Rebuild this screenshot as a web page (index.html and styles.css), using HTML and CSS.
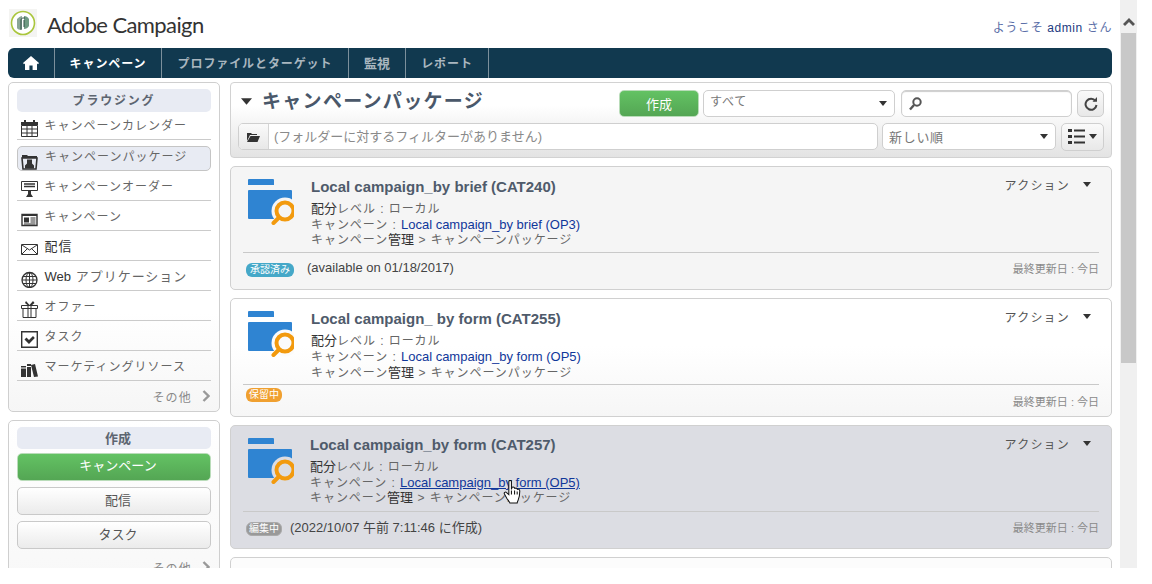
FILE: index.html
```html
<!DOCTYPE html>
<html lang="ja">
<head>
<meta charset="utf-8">
<title>Adobe Campaign</title>
<link rel="stylesheet" href="styles.css">
</head>
<body>
<svg class="defs" width="0" height="0" aria-hidden="true">
  <symbol id="folder-search" viewBox="0 0 46 46">
    <path d="M1 0h24a1 1 0 0 1 1 1v5H0V1a1 1 0 0 1 1-1z" fill="#2f84d2"/>
    <path d="M0 12a1 1 0 0 1 1-1h42a1 1 0 0 1 1 1v27a1 1 0 0 1-1 1H1a1 1 0 0 1-1-1z" fill="#2f84d2"/>
    <circle cx="37" cy="32" r="13.500" fill="currentColor"/>
    <circle cx="37" cy="32" r="8.500" fill="currentColor" stroke="#f29a0e" stroke-width="4"/>
    <path d="M31 38.500l-5.500 5.500" stroke="#f29a0e" stroke-width="4" stroke-linecap="round"/>
  </symbol>
  <symbol id="caret" viewBox="0 0 10 6"><path d="M0 0h10L5 6z"/></symbol>
  <symbol id="chev" viewBox="0 0 8 12"><path d="M1.500 1l5 5-5 5" fill="none" stroke="#999" stroke-width="2.400"/></symbol>
</svg>

<div class="viewport">
  <div class="page">
    <header class="top">
      <div class="brand">
        <span class="logo">
          <svg width="28" height="28" viewBox="0 0 28 28">
            <rect width="28" height="28" fill="#f4f4f2"/>
            <circle cx="14" cy="14" r="11.500" fill="#fff" stroke="#aac63c" stroke-width="1.600"/>
            <path d="M8 10c2-2 4-3 5-3v13c-2 1-4 1-5-1z" fill="#8aa596"/>
            <path d="M15 7c2 0 4 1 5 3v7c-1 2-3 3-5 3z" fill="#6f9a82"/>
            <path d="M12 21V11c0-1 1-2 2-2h2M15 18v-7" fill="none" stroke="#2f4f45" stroke-width="1"/>
          </svg>
        </span>
        <span class="brand-name">Adobe Campaign</span>
      </div>
      <div class="welcome">ようこそ <b>admin</b> さん</div>
    </header>

    <nav class="nav">
      <a class="nav-home" href="#">
        <svg width="16" height="14" viewBox="0 0 16 14"><path d="M8 0l8 7-1 1.200-1-.8V14H9.600V9.400H6.400V14H2V7.400l-1 .8L0 7z" fill="#fff"/></svg>
      </a>
      <a class="nav-item active w-camp" href="#">キャンペーン</a>
      <a class="nav-item w-prof" href="#">プロファイルとターゲット</a>
      <a class="nav-item w-mon" href="#">監視</a>
      <a class="nav-item w-rep" href="#">レポート</a>
    </nav>

    <div class="columns">
      <aside class="side">
        <section class="panel browse">
          <h3 class="panel-head">ブラウジング</h3>
          <ul class="menu">
            <li class="menu-item">
              <svg class="mi" viewBox="0 0 17 17"><path d="M4 0v3M13 0v3" stroke="#333" stroke-width="2"/><path d="M0 2h17v3H0z" fill="#333"/><path d="M.5 5.500h16v11H.5zM.5 9h16M.5 13h16M6 5.500v11M11 5.500v11" fill="none" stroke="#333"/></svg>
              <span>キャンペーンカレンダー</span>
            </li>
            <li class="menu-item selected">
              <svg class="mi" viewBox="0 0 17 17"><path d="M1 2h5l1 1h9v2H1z" fill="#333"/><path d="M1 5h15l-1 11H2z" fill="none" stroke="#333" stroke-width="1.600"/><path d="M6 6.500h5v4l2 2v3H4v-3l2-2z" fill="#333"/></svg>
              <span>キャンペーンパッケージ</span>
            </li>
            <li class="menu-item">
              <svg class="mi" viewBox="0 0 17 17"><path d="M.5.5h16v9H.5z" fill="#fff" stroke="#333"/><path d="M3 3h11M3 5.500h11" stroke="#333" stroke-width="1.400"/><path d="M7 9h3v4l2 3H5l2-3z" fill="#333"/></svg>
              <span>キャンペーンオーダー</span>
            </li>
            <li class="menu-item">
              <svg class="mi" viewBox="0 0 17 17"><path d="M1 3.500h15v11H1z" fill="#fff" stroke="#333" stroke-width="1.400"/><path d="M1 3h15v2H1zM3 6.500h5v5H3z" fill="#333"/><path d="M9.500 7h5M9.500 9h5M9.500 11h5M3 13h11.500" stroke="#333"/></svg>
              <span>キャンペーン</span>
            </li>
            <li class="menu-item">
              <svg class="mi" viewBox="0 0 17 17"><path d="M.5 3.500h16v10H.5z" fill="#fff" stroke="#333"/><path d="M1 4l7.500 5L16 4M1 13l5.500-5.500M16 13l-5.500-5.500" fill="none" stroke="#333"/></svg>
              <span class="dark">配信</span>
            </li>
            <li class="menu-item">
              <svg class="mi" viewBox="0 0 17 17"><circle cx="8.500" cy="9" r="7.500" fill="#fff" stroke="#333" stroke-width="1.300"/><path d="M1 9h15M2 5.500h13M2 12.500h13M8.500 1.500v15" stroke="#333"/><ellipse cx="8.500" cy="9" rx="3.500" ry="7.500" fill="none" stroke="#333"/></svg>
              <span class="dark"><span class="latin">Web</span> <span class="kana">アプリケーション</span></span>
            </li>
            <li class="menu-item">
              <svg class="mi" viewBox="0 0 17 17"><path d="M5 0l3.500 4L12 0l1.500 2-3 2.500H7L4 2z" fill="#333"/><path d="M.5 4.500h16v3H.5zM2 7.500h13v9H2zM7 4.500h3v12H7z" fill="#fff" stroke="#333"/></svg>
              <span>オファー</span>
            </li>
            <li class="menu-item">
              <svg class="mi" viewBox="0 0 17 17"><path d="M.7.7h15.600v15.600H.7z" fill="#fff" stroke="#333" stroke-width="1.400"/><path d="M3.500 8.500l2-2 2.500 2.500 4-4 1.800 2-5.800 6z" fill="#333"/></svg>
              <span>タスク</span>
            </li>
            <li class="menu-item">
              <svg class="mi" viewBox="0 0 17 17"><path d="M0 5h5v11H0zM6 3h4v13H6zM10 4l4-1 3 12.500-4 .500z" fill="#333"/><path d="M0 7h5M6 5.500h4" stroke="#fff"/></svg>
              <span>マーケティングリソース</span>
            </li>
          </ul>
          <a class="more" href="#">その他 <svg class="chev"><use href="#chev"/></svg></a>
        </section>

        <section class="panel create">
          <h3 class="panel-head small">作成</h3>
          <button class="btn green" type="button">キャンペーン</button>
          <button class="btn" type="button">配信</button>
          <button class="btn" type="button">タスク</button>
          <a class="more" href="#">その他 <svg class="chev"><use href="#chev"/></svg></a>
        </section>
      </aside>

      <main class="main">
        <section class="toolbar">
          <div class="tool-row">
            <svg class="title-caret"><use href="#caret"/></svg>
            <h1 class="title">キャンペーンパッケージ</h1>
            <button class="btn green create-btn" type="button">作成</button>
            <div class="field select all"><span>すべて</span><svg class="mini"><use href="#caret"/></svg></div>
            <div class="field search">
              <svg width="13" height="14" viewBox="0 0 13 14"><circle cx="8" cy="5" r="3.700" fill="none" stroke="#555" stroke-width="2"/><path d="M5 8l-4 4.500" stroke="#555" stroke-width="2.400"/></svg>
            </div>
            <button class="icon-btn refresh" type="button">
              <svg width="14" height="14" viewBox="0 0 14 14"><path d="M11.500 4A5.500 5.500 0 1 0 12.500 8" fill="none" stroke="#444" stroke-width="2"/><path d="M8.500 4.800H13V0z" fill="#444"/></svg>
            </button>
          </div>
          <div class="tool-row second">
            <div class="filter">
              <span class="filter-icon">
                <svg width="13" height="10" viewBox="0 0 13 10"><path d="M0 1h4l1 1h5v1H3L0 9z" fill="#333"/><path d="M3.500 4H13l-2.500 6H0z" fill="#333"/></svg>
              </span>
              <span class="filter-text">(フォルダーに対するフィルターがありません)</span>
            </div>
            <div class="field select sort"><span>新しい順</span><svg class="mini"><use href="#caret"/></svg></div>
            <button class="icon-btn view" type="button">
              <svg width="17" height="15" viewBox="0 0 17 15"><path d="M0 0h4v3H0zM0 6h4v3H0zM0 12h4v3H0zM6 .500h11v2H6zM6 6.500h11v2H6zM6 12.500h11v2H6z" fill="#333"/></svg>
              <svg class="mini"><use href="#caret"/></svg>
            </button>
          </div>
        </section>

        <article class="card">
          <div class="card-body">
            <svg class="card-icon"><use href="#folder-search"/></svg>
            <div class="card-info">
              <h2 class="card-title">Local campaign_by brief (CAT240)</h2>
              <p><span class="dark">配分</span>レベル : ローカル</p>
              <p>キャンペーン : <a href="#">Local campaign_by brief (OP3)</a></p>
              <p>キャンペーン<span class="dark">管理</span> &gt; キャンペーンパッケージ</p>
            </div>
            <div class="actions">アクション<svg class="mini"><use href="#caret"/></svg></div>
          </div>
          <div class="card-foot">
            <span class="badge blue">承認済み</span>
            <span class="note">(available on 01/18/2017)</span>
            <span class="updated">最終更新日 : 今日</span>
          </div>
        </article>

        <article class="card short">
          <div class="card-body">
            <svg class="card-icon"><use href="#folder-search"/></svg>
            <div class="card-info">
              <h2 class="card-title">Local campaign_ by form (CAT255)</h2>
              <p><span class="dark">配分</span>レベル : ローカル</p>
              <p>キャンペーン : <a href="#">Local campaign_by form (OP5)</a></p>
              <p>キャンペーン<span class="dark">管理</span> &gt; キャンペーンパッケージ</p>
            </div>
            <div class="actions">アクション<svg class="mini"><use href="#caret"/></svg></div>
          </div>
          <div class="card-foot">
            <span class="badge orange">保留中</span>
            <span class="updated">最終更新日 : 今日</span>
          </div>
        </article>

        <article class="card hover">
          <div class="card-body">
            <svg class="card-icon"><use href="#folder-search"/></svg>
            <div class="card-info">
              <h2 class="card-title">Local campaign_by form (CAT257)</h2>
              <p><span class="dark">配分</span>レベル : ローカル</p>
              <p>キャンペーン : <a class="under" href="#">Local campaign_by form (OP5)</a></p>
              <p>キャンペーン<span class="dark">管理</span> &gt; キャンペーンパッケージ</p>
            </div>
            <div class="actions">アクション<svg class="mini"><use href="#caret"/></svg></div>
          </div>
          <div class="card-foot">
            <span class="badge gray">編集中</span>
            <span class="note tight">(2022/10/07 午前 7:11:46 に作成)</span>
            <span class="updated">最終更新日 : 今日</span>
          </div>
          <svg class="cursor" width="20" height="24" viewBox="0 0 18 23"><path d="M5 1.500c0-1.500 2.500-1.500 2.500 0V9l.5-2c1.500-.5 2.500 0 2.500 1l.5 0c1-.5 2 0 2.200 1 1-.5 2.300 0 2.300 1.500 0 3-.5 6-1.500 8.500-.5 1.500-1 2.500-1 3H6c-.5-1.500-2-3-3-4.500L.8 13.500c-.8-1.500 1-2.500 2-1.500L5 14z" fill="#fff" stroke="#111" stroke-width="1"/><path d="M7.500 10v4M10.500 10v4M13 11v3" stroke="#111"/></svg>
        </article>

        <article class="card cut"></article>
      </main>
    </div>
  </div>

  <div class="scrollbar">
    <svg class="scroll-up" width="12" height="8" viewBox="0 0 12 8"><path d="M0 6l6-6 6 6-2 2-4-4-4 4z" fill="#555"/></svg>
    <div class="thumb"></div>
  </div>
</div>
</body>
</html>
```

FILE: styles.css
```css
* { box-sizing: border-box; }

html, body {
  margin: 0;
  padding: 0;
  background: #fff;
}

body {
  font-family: "Liberation Sans", "Noto Sans CJK JP", sans-serif;
  font-size: 12px;
  color: #666;
  overflow: hidden;
}

.defs { position: absolute; }

a { text-decoration: none; }

.viewport {
  display: flex;
  height: 568px;
  width: 1137px;
  overflow: hidden;
}

.page {
  width: 1120px;
  padding: 0 8px;
  flex: none;
}

/* header */
.top {
  display: flex;
  justify-content: space-between;
  height: 48px;
}

.brand {
  display: flex;
  align-items: flex-start;
  padding: 9px 0 0 1px;
  gap: 10px;
}

.logo { display: block; height: 28px; }

.brand-name {
  font-family: "Lato", sans-serif;
  font-size: 22px;
  line-height: 31px;
  letter-spacing: -0.6px;
  color: #333;
}

.welcome {
  padding-top: 21px;
  font-size: 12px;
  line-height: 15px;
  color: #5b6fa8;
  letter-spacing: 0.6px;
}

.welcome b { font-weight: normal; color: #1c3a80; }

/* nav */
.nav {
  display: flex;
  height: 30px;
  background: #11394f;
  border-radius: 6px;
}

.nav-home {
  width: 47px;
  display: flex;
  align-items: center;
  justify-content: center;
  border-right: 1px solid #7c909c;
  flex: none;
}

.nav-item {
  display: flex;
  align-items: center;
  justify-content: center;
  padding-bottom: 2px;
  color: #a9b6bf;
  font-size: 12px;
  font-weight: bold;
  border-right: 1px solid #7c909c;
  letter-spacing: 0.9px;
}

.nav-item.active { color: #fff; }
.w-camp { width: 107px; }
.w-prof { width: 187px; }
.w-mon { width: 57px; font-size: 13px; letter-spacing: 0; }
.w-rep { width: 83px; }

/* columns */
.columns {
  display: flex;
  gap: 10px;
  padding-top: 4px;
  align-items: flex-start;
}

.side { width: 212px; flex: none; }
.main { flex: 1; min-width: 0; }

.panel {
  border: 1px solid #cfcfcf;
  border-radius: 5px;
  background: linear-gradient(#fff 70%, #f6f6f6);
  padding: 6px 8px 0;
}

.browse { height: 330px; margin-bottom: 8px; }
.create { height: 160px; background: linear-gradient(#fff, #f8f8f8); }

.panel-head {
  margin: 0;
  height: 23px;
  padding-top: 1px;
  line-height: 23px;
  text-align: center;
  font-size: 12px;
  font-weight: bold;
  color: #5d6570;
  background: #e8ebf3;
  border-radius: 5px;
  letter-spacing: 1.800px;
}

.panel-head.small {
  font-size: 13px;
  height: 22px;
  padding: 0 0 0 8px;
  letter-spacing: 0;
}

.menu {
  list-style: none;
  margin: 0;
  padding: 0;
}

.menu-item {
  display: flex;
  align-items: center;
  height: 30px;
  padding: 0 0 0 3.500px;
  gap: 7px;
  font-size: 12px;
  letter-spacing: 1px;
  color: #666;
  border-bottom: 1px solid #cbcbcb;
  white-space: nowrap;
}

.menu-item:first-child { height: 28px; padding-bottom: 2px; }

.menu-item.selected {
  height: 25px;
  margin: 6px 0 0;
  padding: 0 0 6px 3px;
  gap: 7px;
  background: #e8ebf3;
  border: 1px solid #c5c5c5;
  border-radius: 5px;
}

.mi { width: 17px; height: 17px; flex: none; margin-top: 8px; }
.selected .mi { margin-top: 11px; }

.dark { color: #333; }
.latin { font-size: 13px; letter-spacing: 0; }
.kana { color: #666; }
.menu-item .dark { font-size: 13px; }

.more {
  display: flex;
  justify-content: flex-end;
  align-items: center;
  height: 33px;
  padding: 0 1px 3px 0;
  gap: 10px;
  color: #8a8a8a;
  font-size: 12px;
  letter-spacing: 1.200px;
}

.chev { width: 8px; height: 12px; }

/* buttons */
.btn {
  display: block;
  width: 100%;
  height: 28px;
  margin-top: 6px;
  padding: 0 0 3px 8px;
  font: inherit;
  font-size: 13px;
  color: #555;
  background: linear-gradient(#fff, #ebebeb);
  border: 1px solid #c9c9c9;
  border-radius: 5px;
}

.panel .btn.green { margin-top: 4px; height: 28px; padding-bottom: 5px; }
.panel .btn + .btn { margin-top: 6px; }
.create .more { height: 34px; padding: 2px 1px 0 0; }

.btn.green {
  color: #fff;
  background: linear-gradient(#63c263, #54a654);
  border-color: #b9dcb9;
}

/* toolbar */
.toolbar {
  height: 76px;
  border: 1px solid #d2d2d2;
  border-radius: 4px;
  background: linear-gradient(#fff 30%, #e3e3e3);
  padding: 6px 7px 0;
}

.tool-row {
  display: flex;
  align-items: center;
  height: 29px;
}

.tool-row.second { margin-top: 4px; }

.title-caret {
  width: 11px;
  height: 7px;
  margin: 0 10px 4px 3px;
  fill: #333;
}

.title {
  margin: 0 0 8px;
  flex: 1;
  font-size: 19px;
  font-weight: bold;
  color: #4a586a;
  letter-spacing: 1.300px;
}

.create-btn.btn {
  width: 80px;
  height: 27px;
  margin: 0 4px 0 0;
  padding: 0;
}

.field {
  background: #fff;
  border: 1px solid #cfcfcf;
  border-radius: 5px;
  height: 27px;
  display: flex;
  align-items: center;
}

.select {
  justify-content: space-between;
  padding: 0 7px 0 6px;
  color: #777;
}

.mini { width: 8px; height: 5px; fill: #333; flex: none; }

.all { width: 192px; margin-right: 6px; }
.all span { font-size: 12px; margin-top: -6px; letter-spacing: 0.8px; }

.search {
  width: 171px;
  margin-right: 5px;
  padding-left: 7px;
  box-shadow: inset 0 1px 1px #ccc;
}

.icon-btn {
  display: flex;
  align-items: center;
  justify-content: center;
  height: 27px;
  padding: 0;
  background: linear-gradient(#fafafa, #e8e8e8);
  border: 1px solid #cfcfcf;
  border-radius: 5px;
}

.refresh { width: 27px; }

.filter {
  display: flex;
  width: 640px;
  height: 27px;
  margin-right: 4px;
  flex: none;
  background: #fff;
  border: 1px solid #cfcfcf;
  border-radius: 5px;
  overflow: hidden;
}

.filter-icon {
  width: 30px;
  display: flex;
  align-items: center;
  justify-content: center;
  background: linear-gradient(#fafafa, #e8e8e8);
  border-right: 1px solid #d5d5d5;
  flex: none;
}

.filter-text {
  padding-left: 5px;
  font-size: 13px;
  line-height: 26px;
  color: #8a8a8a;
  white-space: nowrap;
}

.sort { width: 174px; margin-right: 5px; font-size: 13px; letter-spacing: 0.7px; }

.view { width: 43px; gap: 4px; height: 28px; }

/* cards */
.card {
  position: relative;
  height: 124px;
  margin-top: 8px;
  padding: 0 12px;
  border: 1px solid #d0d0d0;
  border-radius: 5px;
  background: #f5f5f5;
  color: #f5f5f5;
}

.card.short {
  height: 119px;
  background: linear-gradient(#fff 40%, #f6f6f6);
  color: #fbfbfb;
}

.card.hover { background: #dcdde3; color: #dcdde3; }
.card.cut { height: 40px; background: #fcfcfc; }

.card-body {
  display: flex;
  height: 86px;
  padding: 12px 0 0 5px;
  border-bottom: 1px solid #c9c9c9;
}

.card-icon {
  width: 46px;
  height: 46px;
  flex: none;
  margin: 0 17px 0 0;
}

.card.hover .card-icon { margin-right: 16px; }

.card-info { flex: 1; min-width: 0; }

.card-title {
  margin: -1px 0 6px;
  font-size: 15px;
  line-height: 17px;
  font-weight: bold;
  color: #4f5b6b;
}

.card.hover .card-title { margin-top: -2px; }

.card-info p {
  height: 15.500px;
  margin: 0;
  font-size: 12px;
  line-height: 15.500px;
  letter-spacing: 0.95px;
  color: #666;
  white-space: nowrap;
}

.card.short .card-info p { height: 16px; }

.card-info p .dark { font-size: 13px; letter-spacing: 0; }

.card-info a {
  font-size: 13px;
  color: #10379a;
  letter-spacing: 0;
}

.card-info a.under { text-decoration: underline; }

.actions {
  display: flex;
  gap: 13px;
  align-items: center;
  height: 14px;
  margin: -2px 8px 0 0;
  font-size: 12px;
  letter-spacing: 1.200px;
  color: #555;
}

.card-foot {
  display: flex;
  align-items: center;
  height: 34px;
  padding: 0 0 0 3px;
}

.card.short .card-foot { align-items: flex-start; height: 31px; }
.card.short .badge { margin-top: 3px; }
.card.short .updated { margin-top: 8px; }

.badge {
  display: block;
  height: 14px;
  line-height: 13px;
  padding: 0 3px;
  border-radius: 6px;
  font-size: 10px;
  color: #fff;
  white-space: nowrap;
}

.badge.blue { background: #45a8c8; width: 48px; text-align: center; }
.badge.orange { background: #f0a030; }
.badge.gray {
  width: 36px;
  padding: 0 2px;
  background: #999;
  border: 1px solid #aaa;
  line-height: 12px;
}

.note {
  margin: -6px 0 0 13px;
  font-size: 13px;
  color: #444;
}

.note.tight { margin-left: 8px; }

.updated {
  margin: -5px 0 0 auto;
  font-size: 11px;
  color: #8a8a8a;
}

.cursor {
  position: absolute;
  left: 272px;
  top: 54px;
}

/* scrollbar */
.scrollbar {
  position: relative;
  width: 17px;
  flex: none;
  background: #f0f0f0;
}

.scroll-up {
  position: absolute;
  left: 2.500px;
  top: 18px;
}

.thumb {
  position: absolute;
  left: 1px;
  top: 33px;
  width: 15px;
  height: 330px;
  background: #c8c8c8;
}
```
